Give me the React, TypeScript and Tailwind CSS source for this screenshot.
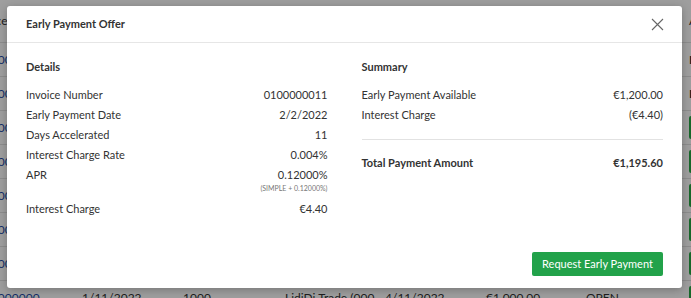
import React from "react";

const rows = [0, 1, 2, 3, 4, 5, 6, 7];

function BackgroundTable() {
  return (
    <div className="w-[691px] h-[298px] overflow-hidden bg-white">
      <div className="flex h-[43px] items-center border-b border-[#e2e2e2] text-[12px] text-[#333] -ml-[30px]">
        <div className="w-[112px] shrink-0">Invoice</div>
        <div className="w-[101px] shrink-0">Date</div>
        <div className="w-[102px] shrink-0">Amount</div>
        <div className="w-[100px] shrink-0">Customer</div>
        <div className="w-[101px] shrink-0">Due Date</div>
        <div className="w-[100px] shrink-0">Total</div>
        <div className="w-[103px] shrink-0">Status</div>
        <div className="shrink-0">Action</div>
      </div>
      {rows.map((i) => (
        <div
          key={i}
          className="flex h-[34px] items-center border-b border-[#e2e2e2] text-[12px] text-[#333] -ml-[30px]"
        >
          <div className="w-[112px] shrink-0 text-[#1f4ea8]">0100000000</div>
          <div className="w-[101px] shrink-0">1/11/2022</div>
          <div className="w-[102px] shrink-0">1000</div>
          <div className="w-[100px] shrink-0 whitespace-nowrap overflow-hidden">LidiDi Trade (000</div>
          <div className="w-[101px] shrink-0">4/11/2022</div>
          <div className="w-[100px] shrink-0">€1,000.00</div>
          <div className="w-[103px] shrink-0">OPEN</div>
          {i < 2 ? (
            <div className="shrink-0 font-bold">I</div>
          ) : (
            <div className="h-[23px] w-[60px] shrink-0 rounded-[2px] bg-[#28a745]" />
          )}
        </div>
      ))}
    </div>
  );
}

function Row({ label, value, bold }: { label: string; value: string; bold?: boolean }) {
  return (
    <div className={`flex h-[20px] items-center justify-between ${bold ? "font-bold" : ""}`}>
      <span>{label}</span>
      <span>{value}</span>
    </div>
  );
}

export default function App() {
  return (
    <div
      className="relative w-[691px] h-[298px] overflow-hidden"
      style={{ fontFamily: "Lato, 'Open Sans', sans-serif" }}
    >
      <BackgroundTable />
      <div className="absolute inset-0 bg-black/[0.38]" />

      <div className="absolute left-[7px] top-[6px] w-[675px] h-[282px] rounded-[3px] bg-white shadow-[0_2px_8px_rgba(0,0,0,0.25)] flex flex-col">
        <div className="flex h-[37px] items-center justify-between border-b border-[#e6e6e6] pl-[19px] pr-[18px]">
          <span className="text-[11px] font-bold text-[#333]">Early Payment Offer</span>
          <svg width="13" height="13" viewBox="0 0 13 13" className="text-[#666]">
            <path d="M1 1L12 12M12 1L1 12" stroke="currentColor" strokeWidth="1.1" fill="none" />
          </svg>
        </div>

        <div className="flex flex-1 flex-col px-[19px] pt-[14px] pb-[12px] text-[11px] text-[#333]">
          <div className="grid grid-cols-2 gap-[34px]">
            <div>
              <div className="flex h-[20px] items-center font-bold">Details</div>
              <div className="mt-[8px]">
                <Row label="Invoice Number" value="0100000011" />
                <Row label="Early Payment Date" value="2/2/2022" />
                <Row label="Days Accelerated" value="11" />
                <Row label="Interest Charge Rate" value="0.004%" />
                <Row label="APR" value="0.12000%" />
                <div className="-mt-[2px] text-right text-[7px] leading-[10px] text-[#777]">
                  (SIMPLE + 0.12000%)
                </div>
                <div className="mt-[6px]">
                  <Row label="Interest Charge" value="€4.40" />
                </div>
              </div>
            </div>
            <div>
              <div className="flex h-[20px] items-center font-bold">Summary</div>
              <div className="mt-[8px]">
                <Row label="Early Payment Available" value="€1,200.00" />
                <Row label="Interest Charge" value="(€4.40)" />
              </div>
              <div className="mt-[14px] border-t border-[#e2e2e2]" />
              <div className="mt-[13px]">
                <Row label="Total Payment Amount" value="€1,195.60" bold />
              </div>
            </div>
          </div>

          <div className="mt-auto flex justify-end">
            <button className="h-[24px] w-[131px] rounded-[2px] bg-[#22a24a] text-[11px] text-white">
              Request Early Payment
            </button>
          </div>
        </div>
      </div>
    </div>
  );
}
